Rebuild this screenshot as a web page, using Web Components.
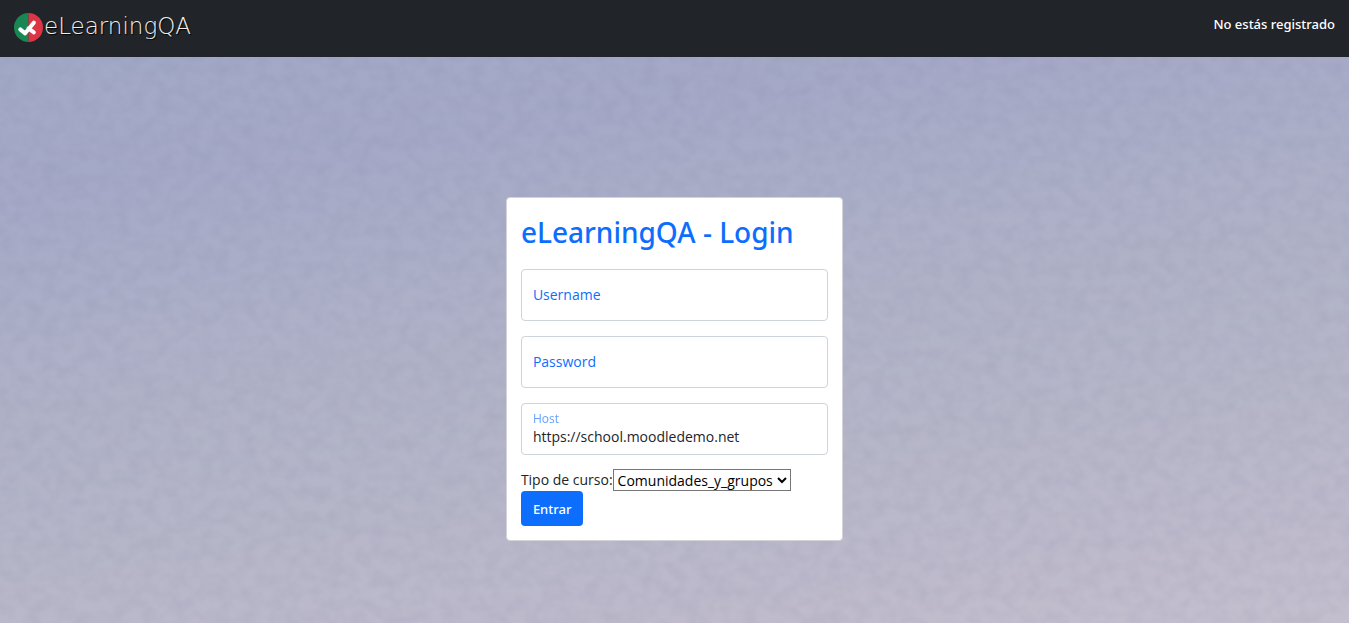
<!DOCTYPE html>
<html lang="es">
<head>
<meta charset="utf-8">
<meta name="viewport" content="width=device-width, initial-scale=1">
<title>eLearningQA - Login</title>
<style>
  html, body { margin: 0; min-height: 100%; }
  body { font: 14px/22px "Open Sans", "Noto Sans", sans-serif; color: #212529; --medium: "Noto Sans", "Open Sans", sans-serif; }
</style>
</head>
<body>
<elqa-page>
  <elqa-navbar slot="header">No estás registrado</elqa-navbar>
  <elqa-login heading="eLearningQA - Login"></elqa-login>
</elqa-page>

<template id="page-template">
  <style>
    :host { display: flex; flex-direction: column; min-height: 100vh; position: relative; isolation: isolate;
      background: linear-gradient(172deg, #9fa8c5 0%, #a5a9c7 24%, #adb0c7 44%, #b4b5c8 65%, #bcb9cb 84%, #c4bfce 100%); }
    .grain { position: absolute; inset: 0; width: 100%; height: 100%; z-index: -1; }
    main { flex: 1; padding: 140px 0 80px; display: grid; justify-items: center; align-items: start; }
  </style>
  <svg class="grain" aria-hidden="true">
    <filter id="noise" x="0" y="0" width="100%" height="100%" color-interpolation-filters="sRGB">
      <feTurbulence type="fractalNoise" baseFrequency="0.07 0.08" numOctaves="2" seed="7"/>
      <feColorMatrix values="0 0 0 0 0.35  0 0 0 0 0.36  0 0 0 0 0.5  0.15 0 0 0 -0.05"/>
    </filter>
    <rect width="100%" height="100%" filter="url(#noise)"/>
  </svg>
  <slot name="header"></slot>
  <main><slot></slot></main>
</template>

<template id="navbar-template">
  <style>
    :host { display: block; background: #212529; color: #fff; }
    nav { display: flex; justify-content: space-between; align-items: flex-start; padding: 13px 14px 15px; }
    a { display: flex; align-items: flex-start; gap: 1px; color: #eee; text-decoration: none;
      font: 200 23px/27px "DejaVu Sans", sans-serif; text-shadow: 1px 1px 1px #000; }
    svg { width: 29px; height: 29px; }
    .status { font: 500 13px/22px var(--medium); }
  </style>
  <nav>
    <a href="#"><svg viewBox="0 0 30 30" aria-hidden="true">
      <path d="M15 0A15 15 0 0 0 15 30Z" fill="#198754"/>
      <path d="M15 0A15 15 0 0 1 15 30Z" fill="#dc3545"/>
      <path d="M6.500 17L11.500 21L20.500 10M15 16L20.500 20" fill="none" stroke="#fff" stroke-width="4.200" stroke-linecap="round" stroke-linejoin="round"/>
    </svg><span>eLearningQA</span></a>
    <span class="status"><slot></slot></span>
  </nav>
</template>

<template id="field-template">
  <style>
    :host { display: block; }
    .field { display: grid; box-sizing: border-box; height: 52px; border: 1px solid #ced4da; border-radius: 4px; background: #fff; }
    input, label { grid-area: 1 / 1; }
    input { box-sizing: border-box; width: 100%; min-width: 0; margin: 0; padding: 16px 11px 0; border: 0; outline: 0;
      border-radius: 3px; background: none; font: inherit; color: #212529; }
    label { align-self: center; justify-self: start; padding: 0 11px; color: #0d6efd; pointer-events: none; }
    input:not(:placeholder-shown) + label, input:focus + label {
      align-self: start; padding-top: 4px; font-size: 12px; opacity: .65; }
    .field:focus-within { border-color: #86b7fe; box-shadow: 0 0 0 4px #0d6efd40; }
  </style>
  <div class="field"><input id="control" placeholder=" "><label for="control"></label></div>
</template>

<template id="login-template">
  <style>
    :host { display: block; box-sizing: border-box; width: 25%; min-width: 337px; padding: 14px;
      border: 1px solid #d3d3da; border-radius: 4px; background: #fff; }
    h1 { margin: 0 0 17px; font: 500 28px/40px var(--medium); color: #0d6efd; white-space: nowrap; }
    form { display: flex; flex-direction: column; align-items: flex-start; }
    .fields { display: grid; gap: 15px; width: 100%; margin-bottom: 14px; }
    .course { display: flex; align-items: center; }
    .course label { line-height: 22px; }
    select { box-sizing: border-box; height: 22px; width: 178px; margin: 0; padding: 0; border: 1px solid #767676; border-radius: 0;
      background: #fff; color: #000; font: inherit; }
    button { height: 35px; margin: 0; padding: 0 12px; border: 0; border-radius: 4px; background: #0d6efd; color: #fff;
      font: 500 13px/22px var(--medium); cursor: pointer; }
  </style>
  <h1></h1>
  <form>
    <div class="fields">
      <elqa-field label="Username" type="text"></elqa-field>
      <elqa-field label="Password" type="password"></elqa-field>
      <elqa-field label="Host" type="url" value="https://school.moodledemo.net"></elqa-field>
    </div>
    <div class="course">
      <label for="type">Tipo de curso:</label>
      <select id="type"><option>Comunidades_y_grupos</option></select>
    </div>
    <button type="submit">Entrar</button>
  </form>
</template>

<script>
  class TemplateElement extends HTMLElement {
    constructor() {
      super();
      this.attachShadow({ mode: "open" })
        .append(document.getElementById(this.constructor.template).content.cloneNode(true));
    }
  }
  class ElqaPage extends TemplateElement { static template = "page-template"; }
  class ElqaNavbar extends TemplateElement { static template = "navbar-template"; }
  class ElqaField extends TemplateElement {
    static template = "field-template";
    connectedCallback() {
      const input = this.shadowRoot.querySelector("input");
      input.type = this.getAttribute("type") || "text";
      input.value = this.getAttribute("value") || "";
      this.shadowRoot.querySelector("label").textContent = this.getAttribute("label");
    }
  }
  class ElqaLogin extends TemplateElement {
    static template = "login-template";
    connectedCallback() {
      this.shadowRoot.querySelector("h1").textContent = this.getAttribute("heading");
      this.shadowRoot.querySelector("form").addEventListener("submit", e => e.preventDefault());
    }
  }
  customElements.define("elqa-page", ElqaPage);
  customElements.define("elqa-navbar", ElqaNavbar);
  customElements.define("elqa-field", ElqaField);
  customElements.define("elqa-login", ElqaLogin);
</script>
</body>
</html>
